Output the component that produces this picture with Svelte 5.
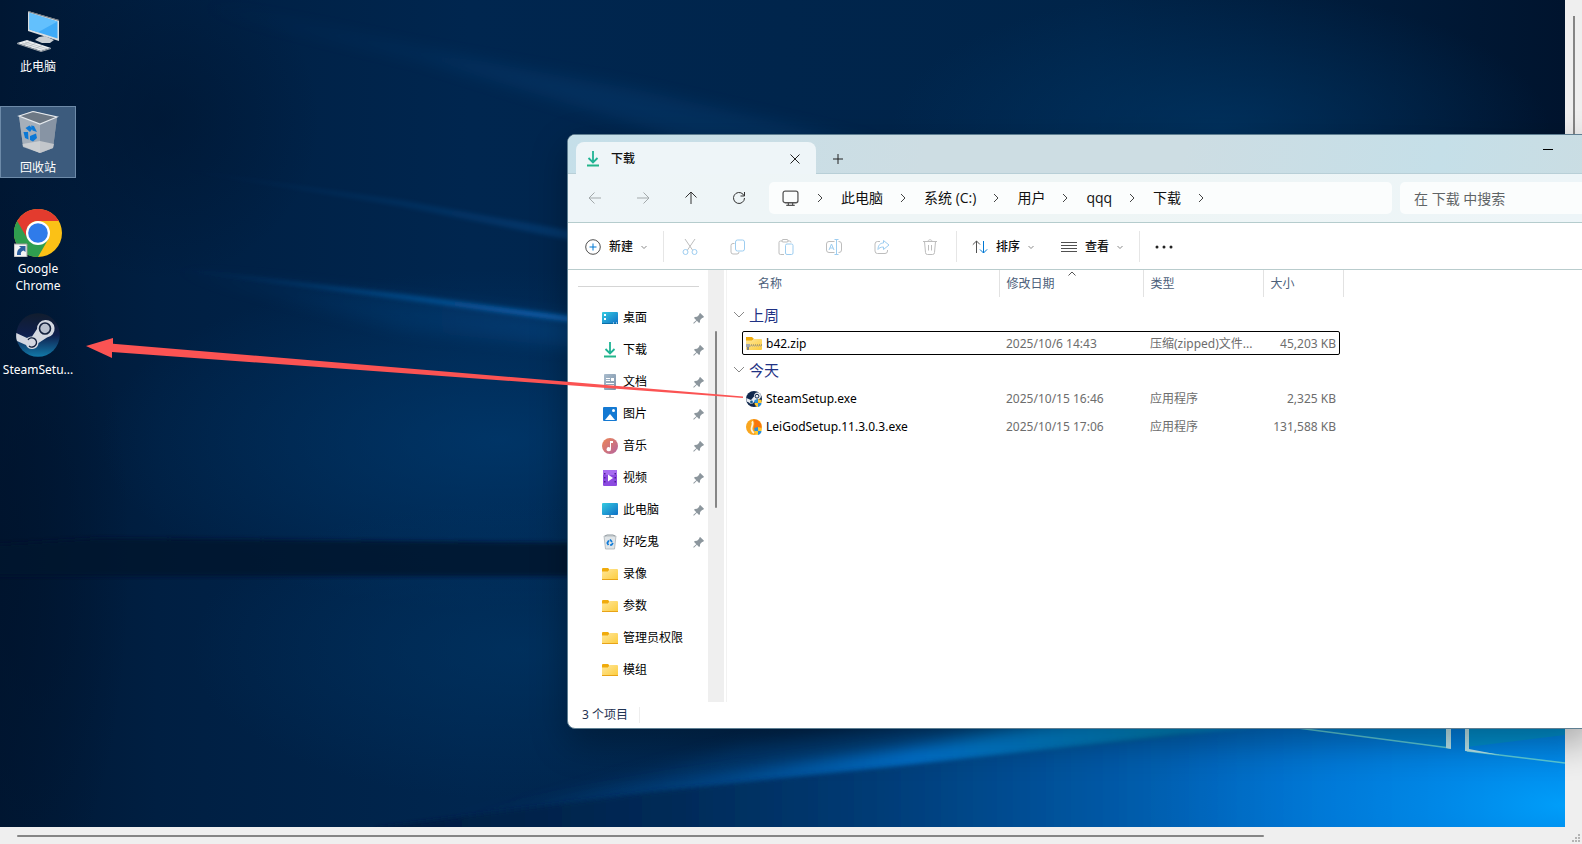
<script>
  const desktopIcons = [
    { icon: 'computer', label: '此电脑' },
    { icon: 'bin', label: '回收站', selected: true },
    { icon: 'chrome', label: 'Google Chrome' },
    { icon: 'steam', label: 'SteamSetu...' }
  ];

  const crumbs = ['此电脑', '系统 (C:)', '用户', 'qqq', '下载'];

  const tools = [
    { icon: 'cut', label: '剪切' },
    { icon: 'copy', label: '复制' },
    { icon: 'paste', label: '粘贴' },
    { icon: 'rename', label: '重命名' },
    { icon: 'share', label: '共享' },
    { icon: 'trash', label: '删除' }
  ];

  const places = [
    { icon: 'desktop', label: '桌面', pinned: true },
    { icon: 'download', label: '下载', pinned: true },
    { icon: 'document', label: '文档', pinned: true },
    { icon: 'picture', label: '图片', pinned: true },
    { icon: 'music', label: '音乐', pinned: true },
    { icon: 'video', label: '视频', pinned: true },
    { icon: 'monitor', label: '此电脑', pinned: true },
    { icon: 'smallbin', label: '好吃鬼', pinned: true },
    { icon: 'folder', label: '录像' },
    { icon: 'folder', label: '参数' },
    { icon: 'folder', label: '管理员权限' },
    { icon: 'folder', label: '模组' }
  ];

  const groups = [
    {
      name: '上周',
      files: [
        { icon: 'zip', name: 'b42.zip', date: '2025/10/6 14:43', type: '压缩(zipped)文件...', size: '45,203 KB', focused: true }
      ]
    },
    {
      name: '今天',
      files: [
        { icon: 'steamexe', name: 'SteamSetup.exe', date: '2025/10/15 16:46', type: '应用程序', size: '2,325 KB' },
        { icon: 'leigod', name: 'LeiGodSetup.11.3.0.3.exe', date: '2025/10/15 17:06', type: '应用程序', size: '131,588 KB' }
      ]
    }
  ];

  let search = '';
</script>

{#snippet bigIcon(name)}
  <svg class="big" viewBox="0 0 48 48" aria-hidden="true">
    {#if name === 'computer'}
      <path d="M14 4 45 13V34L14 24Z" fill="#d9dde0" />
      <path d="M14 4 45 13V14L14 5Z" fill="#70777d" />
      <path d="M15.500 6 43.500 14.500V31.500L15.500 22.500Z" fill="#3fabf8" />
      <path d="M15.500 6 43.500 14.500 24 25.200 15.500 22.500Z" fill="#63c0fd" />
      <path d="M25 30 31 29 40 33 36 36 28 36 21 33Z" fill="#c9ced2" />
      <path d="M3 36 13 33 37 41 27 44Z" fill="#eceff1" />
      <path d="M3 36V37L27 45 37 42V41L27 44Z" fill="#9ea5ab" />
      <path d="M8 36 31 43M11 35 34 42M9 38 17 34M14 40 22 36M20 42 28 38.500" stroke="#a9b0b6" stroke-width=".6" />
    {:else if name === 'bin'}
      <path d="M5 8 19 3 43 9 39 40 26 45 9 38Z" fill="#8f9ba8" />
      <path d="M5 8 26 16V45L9 38Z" fill="#a5afba" />
      <path d="M26 16 43 9 39 40 26 45Z" fill="#8794a4" />
      <path d="M5 8 19 3.500 43 9 26 16Z" fill="#6d7884" stroke="#e6eaee" stroke-width="1.200" />
      <path d="M8.500 36 26 33 40 36 39 40 26 45 9 39Z" fill="#dcdcdc" opacity=".7" />
      <path d="M11.500 20 15.500 17.500 18.500 20.500 16 24ZM17 17.500 20 18 23 24 18.500 22.500ZM9.500 24 14 24 14.500 31.500 11 30ZM16 28 22 25.500 23 30 19 33.500 16 32Z" fill="#0b78d6" />
    {:else if name === 'chrome'}
      <circle cx="24" cy="24" r="24" fill="#fbc116" />
      <path d="M24 24 3.200 12A24 24 0 0 0 24 48L34.400 30Z" fill="#2f9e4f" />
      <path d="M24 12H44.800A24 24 0 0 0 3.200 12L13.600 30A12 12 0 0 1 24 12Z" fill="#e33b2e" />
      <circle cx="24" cy="24" r="12" fill="#fff" />
      <circle cx="24" cy="24" r="9.800" fill="#2f7bea" />
      <path d="M0 35H13V48H0Z" fill="#f4f4f4" stroke="#9a9a9a" />
      <path d="M3 46C3 41 5 39 7 39L5 37H11.500V43L9.500 41.500C7 42 6.500 44 7 46Z" fill="#2c5f9f" />
    {:else if name === 'steam'}
      <defs>
        <linearGradient id="steamBall" x1="0" y1="0" x2="0" y2="1">
          <stop offset="0" stop-color="#111d2e" /><stop offset=".5" stop-color="#0f1f4d" /><stop offset="1" stop-color="#1279a8" />
        </linearGradient>
      </defs>
      <circle cx="24" cy="25" r="21.800" fill="url(#steamBall)" />
      <path d="M2.300 23 13 28C15 26.500 17 26.500 18 26.500L23 19A8.800 8.800 0 1 1 33 27.500L24.500 33A6.500 6.500 0 0 1 12 35L3 31C2 28 2 26 2.300 23Z" fill="#d3d7e0" />
      <circle cx="31" cy="18.500" r="5.500" fill="#b9c0ce" stroke="#14213d" stroke-width="1.600" />
      <path d="M14 30A4.600 4.600 0 1 1 15 36" fill="none" stroke="#14213d" stroke-width="1.300" />
    {/if}
  </svg>
{/snippet}

{#snippet smallIcon(name)}
  <svg class="small" viewBox="0 0 16 16" aria-hidden="true">
    {#if name === 'desktop'}
      <rect y="2" width="16" height="12" rx="1" fill="url(#blueScreen)" />
      <path d="M2 4H4V6H2ZM2 8H4V10H2Z" fill="#fff" />
      <path d="M0 13H16V14H0Z" fill="#0b6fa8" /><path d="M11 13H12M14 13H15" stroke="#fff" />
    {:else if name === 'download'}
      <path d="M8 0V11M3.500 7 8 11.500 12.500 7" fill="none" stroke="#1fb394" stroke-width="1.800" />
      <path d="M2 14.500H14" stroke="#22b58a" stroke-width="2" />
    {:else if name === 'document'}
      <rect x="2" width="12" height="16" rx="1" fill="url(#greyPaper)" />
      <path d="M4 4.500H8M4 6.500H8M4 9.500H12M4 11.500H12" stroke="#fff" /><path d="M9 4H12V7H9Z" fill="#fff" />
    {:else if name === 'picture'}
      <rect x="1" y="1" width="14" height="14" rx="1" fill="#1479d2" />
      <path d="M3 14 8 8 13 14Z" fill="#fff" /><circle cx="11.500" cy="4.500" r="1.500" fill="#fff" />
    {:else if name === 'music'}
      <circle cx="8" cy="8" r="8" fill="url(#musicDisc)" />
      <path d="M8 3H11V5H9V11A2.200 2 0 1 1 8 9.500Z" fill="#fff" />
    {:else if name === 'video'}
      <rect x="1" width="14" height="16" rx="1" fill="#8c4ae0" /><rect x="1" width="14" height="5" rx="1" fill="#a76cf0" />
      <path d="M2 3H3.500V4.500H2ZM2 7H3.500V8.500H2ZM2 11H3.500V12.500H2ZM12.500 3H14V4.500H12.500ZM12.500 7H14V8.500H12.500ZM12.500 11H14V12.500H12.500Z" fill="#4c1d95" />
      <path d="M6 4.500 11 8 6 11.500Z" fill="#fff" />
    {:else if name === 'monitor'}
      <rect y="1" width="16" height="12" rx="1" fill="url(#blueScreen)" />
      <path d="M7 13H9V15H12V16H4V15H7Z" fill="#8c9aa5" />
    {:else if name === 'smallbin'}
      <path d="M2 2H14L12.500 15H3.500Z" fill="#dfe4e7" stroke="#a9b1b6" stroke-width=".8" />
      <path d="M3 2 5 1H11L13 2" fill="none" stroke="#8d969c" />
      <path d="M8 5.500 10 8M11 9 9.500 11H8M6.500 11 5.300 9 6.800 6.500" fill="none" stroke="#0c79d8" stroke-width="1.700" />
    {:else if name === 'folder'}
      <path d="M0 3A1 1 0 0 1 1 2H6L7.500 3.500 6 6H0Z" fill="#f0ab0c" />
      <path d="M0 5.500H6L8 3H15A1 1 0 0 1 16 4V13A1 1 0 0 1 15 14H1A1 1 0 0 1 0 13Z" fill="url(#folderFront)" />
      <path d="M0 13.500H16" stroke="#e8a317" />
    {:else if name === 'zip'}
      <path d="M0 1H6L8 3 6 5H0Z" fill="#f0ab0c" />
      <path d="M0 4.500H6L8 3H15A1 1 0 0 1 16 4V13A1 1 0 0 1 15 14H1A1 1 0 0 1 0 13Z" fill="url(#folderFront)" />
      <path d="M3 9H16" stroke="#70716f" stroke-dasharray="1 1" />
      <path d="M4 10H16" stroke="#a1a19c" stroke-dasharray="1 1" />
      <rect y="8" width="4" height="3" fill="#a6a9ab" /><rect x="1" y="11" width="2" height="3" fill="#888" />
    {:else if name === 'steamexe'}
      <circle cx="8" cy="8" r="8" fill="#10284d" />
      <path d="M.3 7 5 9 8 5.500A3.500 3.500 0 1 1 11 8.500L8 11A2.800 2.800 0 0 1 3 11.500L.6 10.500Z" fill="#e9edf2" />
      <circle cx="11" cy="5.200" r="1.900" fill="#e9edf2" stroke="#10284d" /><circle cx="5.500" cy="11" r="1.400" fill="#1b5a8a" />
      {@render shield()}
    {:else if name === 'leigod'}
      <circle cx="8" cy="8" r="8" fill="#f9a61f" />
      <path d="M6 2.500C7.500 4 6.500 6 5.800 8C5 10.500 6 12.500 8 14" fill="none" stroke="#fff3dd" stroke-width="1.800" />
      <path d="M7 .5C13 0 16.500 5 15 9.500L8 10.500C7 8 10 4 7 .5Z" fill="#f8760d" />
      {@render shield()}
    {/if}
  </svg>
{/snippet}

{#snippet shield()}
  <path d="M8.500 9 12 8V12H8.500Z" fill="#2a8fdc" /><path d="M12 8 15.500 9V12H12Z" fill="#ffc92e" />
  <path d="M8.500 12H12V16C10 15.500 8.500 14 8.500 12Z" fill="#ffc92e" /><path d="M12 12H15.500C15.500 14 14 15.500 12 16Z" fill="#2a8fdc" />
{/snippet}

{#snippet toolIcon(name)}
  <svg class="small line" viewBox="0 0 16 16" aria-hidden="true">
    {#if name === 'cut'}
      <path d="M3 0 10.500 11M13 0 5.500 11" /><g class="tint"><circle cx="3.500" cy="13" r="2.500" /><circle cx="12.500" cy="13" r="2.500" /></g>
    {:else if name === 'copy'}
      <path d="M4.500 4.500H3A2 2 0 0 0 1 6.500V13A2 2 0 0 0 3 15H7A2 2 0 0 0 9 13" /><rect class="tint" x="5.500" y="1" width="9" height="11" rx="2" />
    {:else if name === 'paste'}
      <path d="M4.500 2H2.500A1.500 1.500 0 0 0 1 3.500V14A1.500 1.500 0 0 0 2.500 15.500H6M9.500 2H11.500A1.500 1.500 0 0 1 13 3.500" /><rect x="4" y=".5" width="6" height="2.500" rx="1" /><rect class="tint" x="7.500" y="5" width="7.500" height="10.500" rx="1.500" />
    {:else if name === 'rename'}
      <path d="M8.500 2.500H3A2.500 2.500 0 0 0 .5 5V11A2.500 2.500 0 0 0 3 13.500H8.500M12.500 2.500H13A2.500 2.500 0 0 1 15.500 5V11A2.500 2.500 0 0 1 13 13.500H12.500" /><path class="tint" d="M3 11 5.500 5 8 11M4 9H7M10.500 .5V15.500M8.500 .5H12.500M8.500 15.500H12.500" />
    {:else if name === 'share'}
      <path d="M6 2.500H3.500A2.500 2.500 0 0 0 1 5V12A2.500 2.500 0 0 0 3.500 14.500H11A2.500 2.500 0 0 0 13.500 12V11" /><path class="tint" d="M9.500 1.500 15 6 9.500 10.500V8C6.500 8 5 9 4 10.500C4 6.500 6 4 9.500 4Z" />
    {:else if name === 'trash'}
      <path d="M1 2.500H15M6 2.500C6 .2 10 .2 10 2.500M2.500 2.500 3.500 13.500A2 2 0 0 0 5.500 15.500H10.500A2 2 0 0 0 12.500 13.500L13.500 2.500M6.500 6V11.500M9.500 6V11.500" />
    {/if}
  </svg>
{/snippet}

{#snippet chevronDown()}
  <svg class="caret" viewBox="0 0 6 6" aria-hidden="true"><path d="M.5 2 3 4.500 5.500 2" /></svg>
{/snippet}

<svg class="defs" aria-hidden="true">
  <defs>
    <linearGradient id="blueScreen" x1="0" y1="0" x2="1" y2="1"><stop stop-color="#35cbe0" /><stop offset="1" stop-color="#0f6fc6" /></linearGradient>
    <linearGradient id="greyPaper" x1="0" y1="0" x2="1" y2="1"><stop stop-color="#a9bccd" /><stop offset="1" stop-color="#7d93a9" /></linearGradient>
    <linearGradient id="musicDisc" x1="0" y1="0" x2="1" y2="1"><stop stop-color="#ee8754" /><stop offset="1" stop-color="#b4639f" /></linearGradient>
    <linearGradient id="folderFront" x1="0" y1="0" x2="1" y2="1"><stop stop-color="#ffe79b" /><stop offset="1" stop-color="#fccc3c" /></linearGradient>
  </defs>
</svg>

<div class="viewer">
  <div class="screen">
    <svg class="wallpaper" viewBox="0 0 1565 827" preserveAspectRatio="xMidYMid slice" aria-hidden="true">
      <defs>
        <linearGradient id="night"><stop stop-color="#001733" /><stop offset=".1" stop-color="#001f42" /><stop offset=".3" stop-color="#00264f" /><stop offset=".7" stop-color="#002449" /><stop offset="1" stop-color="#00142e" /></linearGradient>
        <radialGradient id="glow"><stop stop-color="#004078" stop-opacity=".8" /><stop offset="1" stop-color="#004078" stop-opacity="0" /></radialGradient>
        <radialGradient id="glowSoft"><stop stop-color="#003767" stop-opacity=".7" /><stop offset="1" stop-color="#003767" stop-opacity="0" /></radialGradient>
        <radialGradient id="shade"><stop stop-color="#00132c" stop-opacity=".8" /><stop offset="1" stop-color="#00132c" stop-opacity="0" /></radialGradient>
        <radialGradient id="corner"><stop stop-color="#00a4ff" /><stop offset=".3" stop-color="#0094f4" stop-opacity=".7" /><stop offset="1" stop-color="#007ae0" stop-opacity="0" /></radialGradient>
        <linearGradient id="beam"><stop stop-color="#0a5da6" stop-opacity="0" /><stop offset="1" stop-color="#0a62b2" /></linearGradient>
        <linearGradient id="floor" gradientUnits="userSpaceOnUse" x1="370" y1="0" x2="1565" y2="0"><stop stop-color="#001b3d" /><stop offset=".25" stop-color="#002a57" /><stop offset=".42" stop-color="#003b75" /><stop offset=".65" stop-color="#005dad" /><stop offset=".8" stop-color="#0070cc" /><stop offset="1" stop-color="#007ddc" /></linearGradient>
        <linearGradient id="fan" gradientUnits="userSpaceOnUse" x1="420" y1="0" x2="1400" y2="0"><stop stop-color="#00509c" stop-opacity="0" /><stop offset=".25" stop-color="#0557a4" stop-opacity=".6" /><stop offset=".5" stop-color="#0374d2" /><stop offset=".75" stop-color="#0188c4" /><stop offset="1" stop-color="#0179d0" /></linearGradient>
        <filter id="blur2"><feGaussianBlur stdDeviation="2" /></filter>
        <filter id="blur8" x="-20%" y="-50%" width="140%" height="200%"><feGaussianBlur stdDeviation="8" /></filter>
      </defs>
      <rect width="1565" height="827" fill="url(#night)" />
      <ellipse cx="160" cy="120" rx="160" ry="160" fill="url(#shade)" opacity=".6" />
      <ellipse cx="0" cy="560" rx="130" ry="380" fill="url(#shade)" />
      <ellipse cx="1220" cy="130" rx="330" ry="140" fill="url(#glowSoft)" />
      <ellipse cx="500" cy="440" rx="400" ry="170" fill="url(#glow)" opacity=".7" />
      <ellipse cx="520" cy="650" rx="330" ry="150" fill="url(#glowSoft)" opacity=".8" />
      <path d="M200 5 420 50 640 90 880 145 700 145 420 58Z" fill="#0a4d8a" opacity=".25" filter="url(#blur8)" />
      <path d="M150 165 400 200 600 236 600 246 400 206Z" fill="url(#beam)" opacity=".3" filter="url(#blur2)" />
      <path d="M150 266 400 294 600 320 600 326 400 299Z" fill="url(#beam)" filter="url(#blur2)" />
      <path d="M150 266 400 296 600 322V350L400 330Z" fill="url(#beam)" opacity=".3" filter="url(#blur8)" />
      <path d="M-10 545 100 538 600 543 600 576 -10 576Z" fill="#00122d" opacity=".85" filter="url(#blur2)" />
      <path d="M500 812 740 745 1180 690 1600 680V780L1180 740 903 770Z" fill="url(#fan)" opacity=".35" filter="url(#blur8)" />
      <path d="M420 824 653 786 903 748 1080 715 1600 700V780L1180 740 903 770 653 796Z" fill="url(#fan)" filter="url(#blur8)" />
      <path d="M376 828 653 792 903 766 1180 735 1300 722 1600 722V840H376Z" fill="url(#floor)" filter="url(#blur2)" />
      <ellipse cx="1565" cy="805" rx="420" ry="150" fill="url(#corner)" opacity=".85" />
      <path d="M1300 727H1447V747Z" fill="#0088c9" opacity=".6" />
      <path d="M1467 727H1565V735L1467 747Z" fill="#0098c0" opacity=".6" />
      <path d="M1290 727 1450 748M1467 751 1565 763" fill="none" stroke="#59c9d6" stroke-width="1.500" />
      <path d="M1446 727H1451V749L1446 748ZM1465 727H1469V749L1500 755 1465 751Z" fill="#b9e3ea" />
    </svg>

    <div class="icons">
      {#each desktopIcons as item}
        <button class="shortcut" class:selected={item.selected}>
          {@render bigIcon(item.icon)}
          <span>{item.label}</span>
        </button>
      {/each}
    </div>
  </div>
  <div class="vscroll"><div class="thumb"></div></div>
  <div class="hscroll"><div class="thumb"></div></div>
  <svg class="grip" viewBox="0 0 10 10" aria-hidden="true"><path d="M6 0H8V2H6ZM3 3H5V5H3ZM6 3H8V5H6ZM0 6H2V8H0ZM3 6H5V8H3ZM6 6H8V8H6Z" /></svg>

  <section class="window" aria-label="下载">
    <header class="titlebar">
      <div class="tab">
        {@render smallIcon('download')}
        <span>下载</span>
        <button class="close" aria-label="关闭标签页"><svg viewBox="0 0 10 10"><path d="M.5 .5 9.500 9.500M9.500 .5 .5 9.500" /></svg></button>
      </div>
      <button class="newtab" aria-label="新建标签页"><svg viewBox="0 0 10 10"><path d="M5 0V10M0 5H10" /></svg></button>
      <button class="minimize" aria-label="最小化"><svg viewBox="0 0 10 10"><path d="M0 5.500H10" /></svg></button>
    </header>

    <nav class="navbar">
      <button class="nav" disabled aria-label="后退"><svg viewBox="0 0 14 14"><path d="M13 7H1M6.500 1.500 1 7 6.500 12.500" /></svg></button>
      <button class="nav" disabled aria-label="前进"><svg viewBox="0 0 14 14"><path d="M1 7H13M7.500 1.500 13 7 7.500 12.500" /></svg></button>
      <button class="nav" aria-label="向上"><svg viewBox="0 0 14 14"><path d="M7 13V1M1.500 6.500 7 1 12.500 6.500" /></svg></button>
      <button class="nav" aria-label="刷新"><svg viewBox="0 0 14 14"><path d="M12.500 7A5.500 5.500 0 1 1 11 3.200L12.500 5M12.500 1V5H8.500" /></svg></button>
      <div class="address">
        <svg class="pc" viewBox="0 0 16 16" aria-hidden="true"><rect x="1" y="1" width="14" height="11" rx="2" /><path d="M6 12V14M10 12V14M4 14.500H12" /></svg>
        <svg class="sep" viewBox="0 0 6 10" aria-hidden="true"><path d="M1 1 5 5 1 9" /></svg>
        {#each crumbs as crumb}
          <button class="crumb">{crumb}</button>
          <svg class="sep" viewBox="0 0 6 10" aria-hidden="true"><path d="M1 1 5 5 1 9" /></svg>
        {/each}
      </div>
      <input class="search" type="text" placeholder="在 下载 中搜索" aria-label="搜索" bind:value={search} />
    </nav>

    <div class="toolbar">
      <button class="command new">
        <svg class="small dark" viewBox="0 0 16 16" aria-hidden="true"><circle cx="8" cy="8" r="7.300" /><path class="accent" d="M8 4.500V11.500M4.500 8H11.500" /></svg>
        新建 {@render chevronDown()}
      </button>
      <div class="divider"></div>
      <div class="tools">
        {#each tools as tool}
          <button class="tool" disabled aria-label={tool.label}>{@render toolIcon(tool.icon)}</button>
        {/each}
      </div>
      <div class="divider"></div>
      <button class="command sort">
        <svg class="small dark" viewBox="0 0 16 16" aria-hidden="true"><path d="M4.500 14V2M.8 5.700 4.500 2 8 5.500" /><path class="accent" d="M11.500 2V14M8 10.500 11.500 14 15.200 10.300" /></svg>
        排序 {@render chevronDown()}
      </button>
      <button class="command view">
        <svg class="small dark" viewBox="0 0 16 16" aria-hidden="true"><path d="M0 3.500H16M0 6.500H16M0 9.500H16M0 12.500H16" /></svg>
        查看 {@render chevronDown()}
      </button>
      <div class="divider"></div>
      <button class="more" aria-label="查看更多"><svg viewBox="0 0 18 4"><circle cx="2" cy="2" r="1.500" /><circle cx="9" cy="2" r="1.500" /><circle cx="16" cy="2" r="1.500" /></svg></button>
    </div>

    <div class="body">
      <aside>
        <hr />
        <ul>
          {#each places as place}
            <li>
              <button class="place">
                {@render smallIcon(place.icon)}
                <span>{place.label}</span>
                {#if place.pinned}
                  <svg class="pin" viewBox="0 0 10 10" aria-hidden="true"><path d="M6.500 0 10 3.500 9 4.500 8.500 4.300 6.500 6.300 6.300 8.500 5.500 9 3.500 7 .8 9.700 .2 9.200 3 6.500 1 4.500 1.500 3.700 3.700 3.500 5.700 1.500 5.500 1Z" /></svg>
                {/if}
              </button>
            </li>
          {/each}
        </ul>
      </aside>
      <div class="track"><div class="thumb"></div></div>

      <main>
        <table>
          <colgroup><col class="c-name" /><col class="c-date" /><col class="c-type" /><col class="c-size" /></colgroup>
          <thead>
            <tr>
              <th>名称</th>
              <th>修改日期<svg class="sorted" viewBox="0 0 8 5" aria-hidden="true"><path d="M.5 4.500 4 1 7.500 4.500" /></svg></th>
              <th>类型</th>
              <th>大小</th>
            </tr>
          </thead>
          {#each groups as group}
            <tbody>
              <tr>
                <td colspan="4">
                  <button class="group">
                    <svg viewBox="0 0 12 7" aria-hidden="true"><path d="M1 1 6 6 11 1" /></svg>{group.name}
                  </button>
                </td>
              </tr>
              {#each group.files as file}
                <tr class:focused={file.focused}>
                  <td class="name"><div>{@render smallIcon(file.icon)}{file.name}</div></td>
                  <td>{file.date}</td>
                  <td>{file.type}</td>
                  <td class="size">{file.size}</td>
                </tr>
              {/each}
            </tbody>
          {/each}
        </table>
      </main>
    </div>

    <footer><span>3 个项目</span></footer>
  </section>

  <svg class="arrow" width="660" height="64" viewBox="86 336 660 64" aria-hidden="true">
    <path d="M86 346 113 338V343.700L743 396.500V398L112 352V358Z" />
  </svg>
</div>

<style>
  :global(body) {
    margin: 0;
  }

  .viewer {
    position: relative;
    display: grid;
    grid-template-columns: 1fr 17px;
    grid-template-rows: 1fr 17px;
    height: 100vh;
    overflow: hidden;
    background: #efefef;
    font-family: "Noto Sans", "Noto Sans CJK SC", sans-serif;
    font-size: 12px;
    line-height: 16px;
    color: #111;
  }

  button {
    display: flex;
    align-items: center;
    margin: 0;
    padding: 0;
    border: 0;
    background: none;
    font: inherit;
    color: inherit;
  }

  svg {
    flex: none;
    fill: none;
  }

  .defs {
    position: absolute;
    width: 0;
    height: 0;
  }

  .screen {
    position: relative;
    overflow: hidden;
    background: #001f42;
  }

  .wallpaper {
    position: absolute;
    width: 100%;
    height: 100%;
  }

  .icons {
    position: relative;
    display: grid;
    grid-auto-rows: 101px;
    align-items: start;
    width: 76px;
    padding-top: 5px;
  }

  .shortcut {
    flex-direction: column;
    gap: 3px;
    min-height: 72px;
    padding-top: 1px;
    border: 1px solid transparent;
    line-height: 17px;
    color: #fff;
  }

  .shortcut.selected {
    border-color: #6d8aa8;
    background: #3c5b7d;
  }

  .big {
    width: 48px;
    height: 48px;
  }

  .small {
    width: 16px;
    height: 16px;
  }

  .vscroll {
    padding: 16px 0 0 8px;
  }

  .vscroll .thumb {
    width: 2px;
    height: 80%;
    background: #858585;
  }

  .hscroll {
    padding: 8px 8px 0 17px;
  }

  .hscroll .thumb {
    width: 81%;
    height: 2px;
    border-radius: 1px;
    background: #858585;
  }

  .grip {
    align-self: end;
    justify-self: end;
    width: 10px;
    height: 10px;
  }

  .grip path {
    fill: #b4b4b4;
  }

  .window {
    position: absolute;
    top: 134px;
    left: 567px;
    right: -11px;
    border: 1px solid #5f7f92;
    border-radius: 8px 0 0 8px;
    background: #fff;
    box-shadow: 0 14px 36px rgba(0, 0, 0, .3);
  }

  .titlebar {
    display: flex;
    align-items: flex-end;
    height: 39px;
    border-radius: 7px 0 0 0;
    background: linear-gradient(100deg, #c5dfe9, #cddde3 35%, #cddde3 60%, #c5dfe8 85%, #cadde3);
    box-shadow: inset 0 -1px #b8cfd7;
  }

  .tab {
    display: flex;
    align-items: center;
    gap: 10px;
    width: 240px;
    height: 32px;
    margin-left: 8px;
    padding: 1px 16px 0 9px;
    border-radius: 8px 8px 0 0;
    background: #eef5f8;
    box-sizing: border-box;
    font-weight: 500;
  }

  .close {
    margin-left: auto;
  }

  .close svg,
  .newtab svg,
  .minimize svg {
    width: 10px;
    height: 10px;
    stroke: #222;
  }

  .newtab {
    height: 31px;
    margin-left: 17px;
  }

  .minimize {
    align-self: flex-start;
    justify-content: center;
    width: 46px;
    height: 28px;
    margin: 0 21px 0 auto;
  }

  .minimize svg {
    stroke: #000;
  }

  .navbar {
    display: flex;
    align-items: center;
    height: 48px;
    padding-left: 3px;
    border-bottom: 1px solid #b5cccd;
    background: linear-gradient(90deg, #eef5f8, #eef5f5 50%, #edf5f8);
    font-size: 14px;
  }

  .nav {
    justify-content: center;
    width: 48px;
    height: 32px;
  }

  .nav svg {
    width: 14px;
    height: 14px;
    stroke: #333;
  }

  .nav:disabled svg {
    stroke: #a3a9ab;
  }

  .address {
    display: flex;
    flex: 1;
    align-items: center;
    height: 32px;
    margin: 0 8px 0 6px;
    padding-left: 13px;
    border-radius: 5px;
    background: #fbfdfd;
  }

  .pc {
    width: 17px;
    height: 17px;
    margin-right: 18px;
    stroke: #555;
    stroke-width: 1.2;
  }

  .sep {
    width: 6px;
    height: 10px;
    stroke: #444;
  }

  .crumb {
    margin: 0 17px 0 18px;
    font-family: "Open Sans", "Noto Sans CJK SC", sans-serif;
  }

  .search {
    width: 192px;
    height: 32px;
    padding: 0 14px;
    border: 0;
    border-radius: 5px 0 0 5px;
    background: #fbfdfd;
    box-sizing: border-box;
    font: inherit;
  }

  .search::placeholder {
    color: #5f6466;
    opacity: 1;
  }

  .toolbar {
    display: flex;
    align-items: center;
    height: 46px;
    padding-left: 17px;
    border-bottom: 1px solid #b9cccd;
  }

  .command {
    gap: 8px;
    height: 30px;
    font-weight: 500;
  }

  .new {
    margin-right: 16px;
  }

  .tools {
    display: flex;
    margin: 0 2px;
  }

  .sort {
    margin-left: 15px;
  }

  .view {
    margin: 0 16px 0 27px;
  }

  .caret {
    width: 6px;
    height: 6px;
    stroke: #888;
  }

  .dark {
    stroke: #505050;
  }

  .accent {
    stroke: #0078d4;
  }

  .line {
    stroke: #bdbdbd;
  }

  .tint {
    stroke: #9dcdf0;
  }

  .divider {
    width: 1px;
    height: 31px;
    background: #e6e6e6;
  }

  .tool {
    justify-content: center;
    width: 48px;
    height: 30px;
  }

  .command,
  .tool,
  .more {
    padding-top: 2px;
  }

  .more {
    height: 30px;
    margin-left: 15px;
  }

  .more svg {
    width: 18px;
    height: 4px;
    fill: #222;
  }

  .body {
    display: flex;
  }

  aside {
    width: 140px;
    padding: 16px 0;
    box-sizing: border-box;
  }

  hr {
    height: 1px;
    margin: 0 9px 15px 10px;
    border: 0;
    background: #d5d5d5;
  }

  ul {
    margin: 0;
    padding: 0;
    list-style: none;
  }

  .place {
    gap: 5px;
    width: 100%;
    height: 32px;
    padding: 0 4px 0 34px;
    color: #000;
    white-space: nowrap;
  }

  .pin {
    width: 11px;
    height: 11px;
    margin-left: auto;
    fill: #8c969d;
  }

  .track {
    width: 16px;
    padding: 61px 7px 0;
    background: #efefef;
    box-sizing: border-box;
  }

  .track .thumb {
    width: 2px;
    height: 177px;
    border-radius: 1px;
    background: #858585;
  }

  main {
    flex: 1;
    margin-left: 2px;
    padding-left: 6px;
    border-left: 1px solid #f2f2f2;
  }

  table {
    width: 610px;
    border-collapse: collapse;
    table-layout: fixed;
  }

  .c-name {
    width: 266px;
  }

  .c-date {
    width: 144px;
  }

  .c-type {
    width: 120px;
  }

  .c-size {
    width: 80px;
  }

  th {
    position: relative;
    height: 27px;
    padding: 0 7px;
    border-right: 1px solid #e2e2e2;
    box-sizing: border-box;
    font-weight: 400;
    text-align: left;
    color: #4c607a;
  }

  th:first-child {
    padding-left: 25px;
  }

  .sorted {
    position: absolute;
    top: 1px;
    left: 68px;
    width: 8px;
    height: 5px;
    stroke: #555;
  }

  td {
    height: 24px;
    padding: 4px 0 0 7px;
    box-sizing: content-box;
    color: #6d6d6d;
    white-space: nowrap;
  }

  td[colspan] {
    height: 27px;
    padding: 0;
  }

  thead + tbody td[colspan] {
    padding-top: 4px;
  }

  .group {
    gap: 4px;
    height: 27px;
    font-size: 15px;
    color: #1f3284;
  }

  .group svg {
    width: 12px;
    height: 7px;
    stroke: #888;
  }

  .name {
    padding: 4px 0 0 13px;
    color: #000;
  }

  .name div {
    display: flex;
    align-items: center;
    gap: 4px;
  }

  .size {
    padding-right: 7px;
    text-align: right;
  }

  .focused {
    position: relative;
  }

  .focused::after {
    content: "";
    position: absolute;
    inset: 3px 3px 1px 9px;
    border: 1px solid #000;
    border-radius: 2px;
  }

  footer {
    display: flex;
    align-items: center;
    height: 26px;
    padding-left: 14px;
    color: #1f3352;
  }

  footer span {
    padding-right: 11px;
    border-right: 1px solid #eee;
  }

  .arrow {
    position: absolute;
    top: 336px;
    left: 86px;
    pointer-events: none;
  }

  .arrow path {
    fill: #fb5353;
  }
</style>
